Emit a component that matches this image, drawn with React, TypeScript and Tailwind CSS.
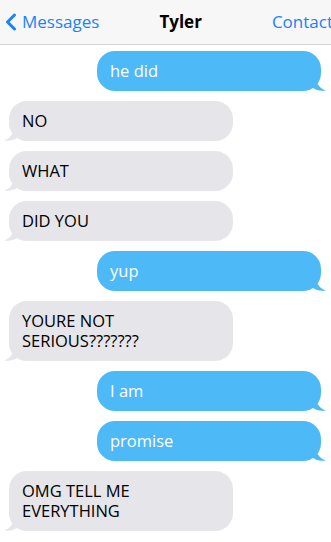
import { ChevronLeft } from "lucide-react";

type Msg = { me: boolean; text: string };

const messages: Msg[] = [
  { me: true, text: "he did" },
  { me: false, text: "NO" },
  { me: false, text: "WHAT" },
  { me: false, text: "DID YOU" },
  { me: true, text: "yup" },
  { me: false, text: "YOURE NOT SERIOUS???????" },
  { me: true, text: "I am" },
  { me: true, text: "promise" },
  { me: false, text: "OMG TELL ME EVERYTHING" },
];

function Bubble({ me, text }: Msg) {
  return (
    <div className={`flex ${me ? "justify-end pr-[10px]" : "justify-start pl-[9px]"}`}>
      <div
        className={`relative w-[224px] rounded-[18px] px-[13px] py-[10px] text-[16.5px] leading-[20px] ${
          me ? "bg-[#4db9f7] text-white" : "bg-[#e5e5ea] text-black"
        }`}
      >
        {text}
        {/* tail */}
        {me ? (
          <svg className="absolute -right-[5px] bottom-0" width="14" height="14" viewBox="0 0 14 14">
            <path d="M0 0 L4 0 C4 6 7 11 14 13.5 C8 14.5 4 13 1 11 L0 0 Z" fill="#4db9f7" />
          </svg>
        ) : (
          <svg className="absolute -left-[5px] bottom-0" width="14" height="14" viewBox="0 0 14 14">
            <path d="M14 0 L10 0 C10 6 7 11 0 13.5 C6 14.5 10 13 13 11 L14 0 Z" fill="#e5e5ea" />
          </svg>
        )}
      </div>
    </div>
  );
}

export default function App() {
  return (
    <div className="w-[331px] h-[542px] overflow-hidden bg-white" style={{ fontFamily: "'Open Sans', sans-serif" }}>
      <div className="h-[45px] bg-[#f7f7f7] border-b border-[#d4d4d4] flex items-center justify-between">
        <div className="flex items-center text-[#1a82fb] text-[17px]">
          <ChevronLeft className="w-[28px] h-[30px] -ml-[3px]" strokeWidth={2.6} />
          <span className="-ml-[3px]">Messages</span>
        </div>
        <span className="font-bold text-[17px] text-black -ml-[10px]">Tyler</span>
        <span className="text-[#1a82fb] text-[17px] -mr-[2px]">Contact</span>
      </div>
      <div className="flex flex-col gap-[10px] pt-[6px]">
        {messages.map((m, i) => (
          <Bubble key={i} {...m} />
        ))}
      </div>
    </div>
  );
}
